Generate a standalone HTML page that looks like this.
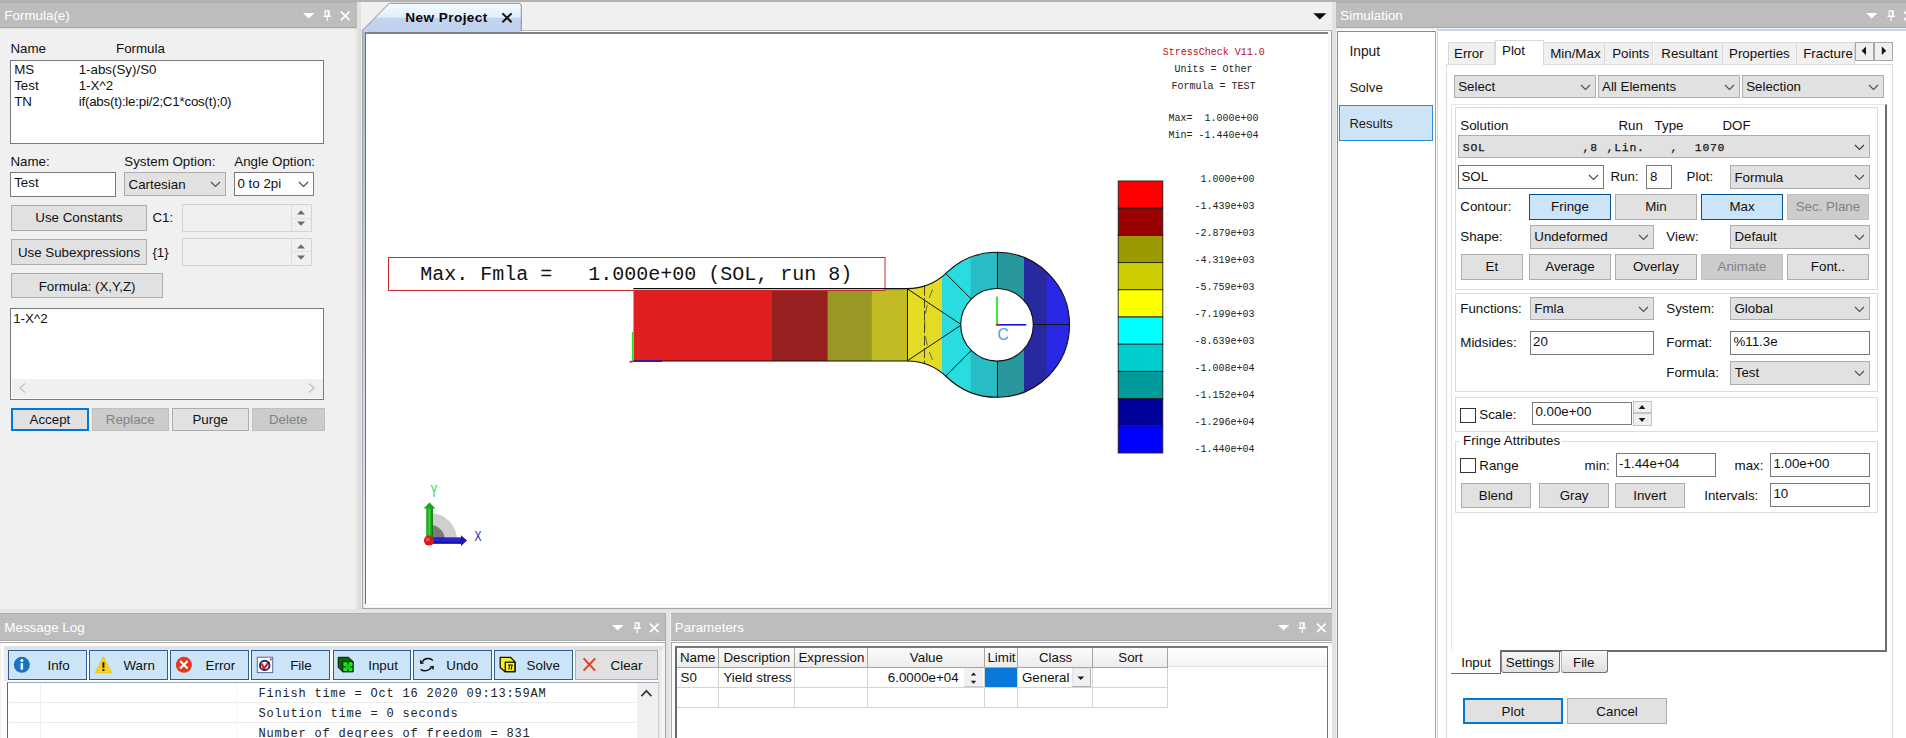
<!DOCTYPE html>
<html lang="en"><head><meta charset="utf-8"><title>StressCheck</title>
<style>
html,body{margin:0;padding:0;}
body{width:1906px;height:738px;overflow:hidden;background:#f0f0f0;position:relative;font-family:"Liberation Sans",sans-serif;font-size:13.33px;color:#111;}
body>div{position:absolute;}
.t{position:absolute;line-height:1;white-space:nowrap;}
.a{position:absolute;overflow:visible;}
</style></head><body>
<div style="left:0.0px;top:0.0px;width:1906.0px;height:2.0px;background:#b2b2b2;"></div>
<div style="left:0.0px;top:1.6px;width:356.6px;height:26.6px;background:#bdbdbd;border-top:1px solid #b0b0b0;border-bottom:1px solid #a9a9a9;box-sizing:border-box;"></div>
<div class="t" style="left:4.3px;top:9.46px;font-size:13.4px;color:#fff;">Formula(e)</div>
<svg class="a" style="left:302.8px;top:13.1px" width="12" height="7"><polygon points="0,0 11.4,0 5.7,5.6" fill="#fff"/></svg>
<svg class="a" style="left:323.2px;top:9.6px" width="9" height="12"><path d="M2.2,0.8 H6.2 V6.2 H2.2 Z M0.5,6.4 H8 M4.2,6.4 V11" fill="none" stroke="#fff" stroke-width="1.2"/><path d="M5.4,1 V6" stroke="#fff" stroke-width="1.4"/></svg>
<svg class="a" style="left:340.4px;top:10.6px" width="11" height="11"><path d="M1,0.7 L9.6,9.1 M9.6,0.7 L1,9.1" stroke="#fff" stroke-width="1.7" fill="none"/></svg>
<div style="left:0.0px;top:28.0px;width:356.6px;height:1.0px;background:#dcdcdc;"></div>
<div style="left:353.6px;top:29.0px;width:7.9px;height:580.0px;background:linear-gradient(90deg,#f0f0f0,#e4e4e4 45%,#d6d6d6);"></div>
<div style="left:356.6px;top:2.0px;width:4.9px;height:27.0px;background:#e2e2e2;"></div>
<div class="t" style="left:10.4px;top:41.52px;font-size:13.33px;">Name</div>
<div class="t" style="left:116.0px;top:41.52px;font-size:13.33px;">Formula</div>
<div style="left:10.0px;top:60.0px;width:314.0px;height:84.0px;background:#fff;border:1px solid #7a7a7a;box-sizing:border-box;"></div>
<div class="t" style="left:14.2px;top:63.32px;font-size:13.33px;">MS</div>
<div class="t" style="left:78.7px;top:63.32px;font-size:13.33px;">1-abs(Sy)/S0</div>
<div class="t" style="left:14.2px;top:79.32px;font-size:13.33px;">Test</div>
<div class="t" style="left:78.7px;top:79.32px;font-size:13.33px;">1-X^2</div>
<div class="t" style="left:14.2px;top:95.32px;font-size:13.33px;">TN</div>
<div class="t" style="left:78.7px;top:95.32px;font-size:13.33px;letter-spacing:-0.22px;">if(abs(t):le:pi/2;C1*cos(t);0)</div>
<div class="t" style="left:10.4px;top:155.42px;font-size:13.33px;">Name:</div>
<div class="t" style="left:124.3px;top:155.42px;font-size:13.33px;">System Option:</div>
<div class="t" style="left:234.3px;top:155.42px;font-size:13.33px;">Angle Option:</div>
<div style="left:10.4px;top:172.4px;width:105.3px;height:25.0px;background:#fff;border:1px solid #7a7a7a;box-sizing:border-box;"></div>
<div class="t" style="left:14.2px;top:176.32px;font-size:13.33px;">Test</div>
<div style="left:124.3px;top:172.4px;width:101.5px;height:23.2px;background:#e1e1e1;border:1px solid #adadad;box-sizing:border-box;"></div>
<div class="t" style="left:128.5px;top:177.62px;font-size:13.33px;">Cartesian</div>
<svg class="a" style="left:209.7px;top:181.1px" width="11" height="6.5"><polyline points="1,1 5.5,5.5 10,1" fill="none" stroke="#505050" stroke-width="1.1"/></svg>
<div style="left:234.3px;top:172.4px;width:79.3px;height:23.2px;background:#fff;border:1px solid #7a7a7a;box-sizing:border-box;"></div>
<div class="t" style="left:237.5px;top:176.92px;font-size:13.33px;">0 to 2pi</div>
<svg class="a" style="left:297.5px;top:181.1px" width="11" height="6.5"><polyline points="1,1 5.5,5.5 10,1" fill="none" stroke="#484848" stroke-width="1.1"/></svg>
<div style="left:11.4px;top:205.4px;width:135.3px;height:25.2px;background:#e1e1e1;border:1px solid #adadad;box-sizing:border-box;"></div>
<div class="t" style="left:-121.0px;width:400px;text-align:center;top:211.42px;font-size:13.33px;">Use Constants</div>
<div class="t" style="left:152.4px;top:211.42px;font-size:13.33px;">C1:</div>
<div style="left:182.2px;top:204.4px;width:129.6px;height:27.2px;background:#f0f0f0;border:1px solid #d3d3d3;box-sizing:border-box;"></div>
<div style="left:291.3px;top:205.4px;width:19.5px;height:25.2px;background:#f0f0f0;border-left:1px solid #dedede;box-sizing:border-box;"></div>
<div style="left:292.3px;top:217.5px;width:18.5px;height:1.0px;background:#e2e2e2;"></div>
<svg class="a" style="left:297.0px;top:209.0px" width="8" height="18"><polygon points="0,5.4 8,5.4 4,1.2" fill="#6c6c6c"/><polygon points="0,12.6 8,12.6 4,16.8" fill="#6c6c6c"/></svg>
<div style="left:11.4px;top:239.4px;width:135.3px;height:25.2px;background:#e1e1e1;border:1px solid #adadad;box-sizing:border-box;"></div>
<div class="t" style="left:-121.0px;width:400px;text-align:center;top:245.52px;font-size:13.33px;">Use Subexpressions</div>
<div class="t" style="left:152.4px;top:245.52px;font-size:13.33px;">{1}</div>
<div style="left:182.2px;top:238.2px;width:129.6px;height:27.4px;background:#f0f0f0;border:1px solid #d3d3d3;box-sizing:border-box;"></div>
<div style="left:291.3px;top:239.2px;width:19.5px;height:25.4px;background:#f0f0f0;border-left:1px solid #dedede;box-sizing:border-box;"></div>
<div style="left:292.3px;top:251.4px;width:18.5px;height:1.0px;background:#e2e2e2;"></div>
<svg class="a" style="left:297.0px;top:242.9px" width="8" height="18"><polygon points="0,5.4 8,5.4 4,1.2" fill="#6c6c6c"/><polygon points="0,12.6 8,12.6 4,16.8" fill="#6c6c6c"/></svg>
<div style="left:11.2px;top:273.4px;width:151.8px;height:25.1px;background:#e1e1e1;border:1px solid #adadad;box-sizing:border-box;"></div>
<div class="t" style="left:-112.9px;width:400px;text-align:center;top:279.72px;font-size:13.33px;">Formula: (X,Y,Z)</div>
<div style="left:10.2px;top:308.3px;width:313.8px;height:91.5px;background:#fff;border:1px solid #7a7a7a;box-sizing:border-box;"></div>
<div class="t" style="left:13.2px;top:312.12px;font-size:13.33px;">1-X^2</div>
<div style="left:11.6px;top:379.0px;width:311.0px;height:19.4px;background:#f0f0f0;"></div>
<svg class="a" style="left:18px;top:381.5px" width="10" height="12"><polyline points="7,1.5 2,6 7,10.5" fill="none" stroke="#c2c2c2" stroke-width="1.3"/></svg>
<svg class="a" style="left:305.5px;top:381.5px" width="10" height="12"><polyline points="3,1.5 8,6 3,10.5" fill="none" stroke="#c2c2c2" stroke-width="1.3"/></svg>
<div style="left:11.2px;top:407.6px;width:77.4px;height:23.2px;background:#e1e1e1;border:2px solid #0078d7;box-sizing:border-box;"></div>
<div class="t" style="left:-150.1px;width:400px;text-align:center;top:412.82px;font-size:13.33px;">Accept</div>
<div style="left:91.5px;top:407.6px;width:77.3px;height:23.2px;background:#cccccc;border:1px solid #bfbfbf;color:#838383;box-sizing:border-box;"></div>
<div class="t" style="left:-69.8px;width:400px;text-align:center;top:412.82px;font-size:13.33px;color:#838383;">Replace</div>
<div style="left:171.5px;top:407.6px;width:77.3px;height:23.2px;background:#e1e1e1;border:1px solid #adadad;box-sizing:border-box;"></div>
<div class="t" style="left:10.2px;width:400px;text-align:center;top:412.82px;font-size:13.33px;">Purge</div>
<div style="left:251.5px;top:407.6px;width:73.4px;height:23.2px;background:#cccccc;border:1px solid #bfbfbf;color:#838383;box-sizing:border-box;"></div>
<div class="t" style="left:88.2px;width:400px;text-align:center;top:412.82px;font-size:13.33px;color:#838383;">Delete</div>
<div style="left:361.5px;top:29.5px;width:970.0px;height:1.0px;background:#b4b4b4;"></div>
<div style="left:361.5px;top:30.5px;width:970.0px;height:578.1px;background:#e9eef8;border:1px solid #a4a4a4;box-sizing:border-box;"></div>
<div style="left:362.5px;top:31.4px;width:968.1px;height:576.2px;background:#fff;"></div>
<div style="left:362.5px;top:31.4px;width:2.9px;height:576.2px;background:linear-gradient(180deg,#a9b9e2 0,#b4c2e6 25%,#d2d9ec 60%,#e6eaf5 100%);"></div>
<div style="left:365.2px;top:31.6px;width:962.8px;height:572.8px;background:#fff;border-left:1.2px solid #6e6e78;border-top:2px solid #828282;box-sizing:border-box;"></div>
<div style="left:366.5px;top:604.4px;width:964.0px;height:3.2px;background:linear-gradient(180deg,#e4e6ea 0,#fdfdfe 1px,#fff 2px,#eaeff8);"></div>
<div style="left:1328.0px;top:33.0px;width:2.6px;height:574.0px;background:linear-gradient(90deg,#e4e6ea 0,#fdfdfe 1px,#f6f8fc);"></div>
<div style="left:1331.5px;top:2.0px;width:4.5px;height:736.0px;background:#e2e2e2;"></div>
<div style="left:362.5px;top:29.6px;width:158.9px;height:2.4px;background:#c0d1ef;"></div>
<svg class="a" style="left:360px;top:0px" width="170" height="32">
<defs><linearGradient id="tg" x1="0" y1="0" x2="0" y2="1">
<stop offset="0" stop-color="#f2fbff"/><stop offset="0.50" stop-color="#dff0fc"/><stop offset="0.54" stop-color="#c3d4f1"/><stop offset="1" stop-color="#c0d1ef"/></linearGradient></defs>
<path d="M1.8,31 L28.5,4 Q29.3,3.3 30.5,3.3 L158.6,3.3 Q161.3,3.3 161.3,6 L161.3,31 Z" fill="url(#tg)"/><path d="M1.8,31 L28.5,4 Q29.3,3.3 30.5,3.3 L158.6,3.3 Q161.3,3.3 161.3,6 L161.3,31" fill="none" stroke="#8e8e8e" stroke-width="1"/>
<path d="M142.4,13.4 L151.6,22.2 M151.6,13.4 L142.4,22.2" stroke="#0c0c0c" stroke-width="2" fill="none"/>
</svg>
<div class="t" style="left:405.3px;top:10.79px;font-size:13.6px;font-weight:bold;letter-spacing:0.42px;color:#0a0a0a;">New Project</div>
<svg class="a" style="left:1313px;top:13.2px" width="14" height="8"><polygon points="0.3,0.3 13.3,0.3 6.8,6.6" fill="#0a0a0a"/></svg>
<svg class="a" style="left:0;top:0" width="1906" height="738" viewBox="0 0 1906 738">
<defs><clipPath id="cp"><path clip-rule="evenodd" d="M633.3,288.6 L907.0,288.6 A57.2,57.2 0 0 0 946.7,272.6 A72.5,72.5 0 1 1 946.7,377.0 A57.2,57.2 0 0 0 907.0,361.0 L633.3,361.0 Z M960.7,324.8 A36.3,36.3 0 1 0 1033.3,324.8 A36.3,36.3 0 1 0 960.7,324.8 Z"/></clipPath></defs>
<g clip-path="url(#cp)">
<rect x="633.3" y="240" width="138.4" height="170" fill="#e02020"/>
<rect x="771.3" y="240" width="56.7" height="170" fill="#982020"/>
<rect x="827.6" y="240" width="44.6" height="170" fill="#9a9824"/>
<rect x="871.8" y="240" width="35.6" height="170" fill="#c0ba24"/>
<rect x="907.0" y="240" width="35.4" height="170" fill="#e4dc24"/>
<rect x="942.0" y="240" width="29.0" height="170" fill="#28dce0"/>
<rect x="970.6" y="240" width="26.4" height="170" fill="#28bcc4"/>
<rect x="996.6" y="240" width="27.8" height="170" fill="#28989c"/>
<rect x="1024.0" y="240" width="23.1" height="170" fill="#2828a0"/>
<rect x="1046.7" y="240" width="24.7" height="170" fill="#2828e6"/>
</g>
<rect x="388.5" y="257.5" width="496.5" height="33" fill="#fff" stroke="#c6282e" stroke-width="1"/>
<path d="M907.5,288.6 V361.0 M907.0,288.6 L960.9,324.4 M907.0,361.0 L960.9,325.2 M997.5,252.3 V288.5 M997.5,361.1 V397.3 M1033.3,324.5 H1069.5 M945.7,273.5 L971.3,299.1 M945.7,376.1 L971.3,350.5" fill="none" stroke="#141414" stroke-width="1"/>
<path d="M924.5,285.6 V364.0" fill="none" stroke="#4a4618" stroke-width="1" stroke-dasharray="10,2.5"/>
<path d="M932.6,289.6 Q916.8,324.8 932.6,360.0" fill="none" stroke="#4a4a20" stroke-width="0.8" stroke-dasharray="9,7"/>
<path d="M633.3,288.6 L907.0,288.6 A57.2,57.2 0 0 0 946.7,272.6 A72.5,72.5 0 1 1 946.7,377.0 A57.2,57.2 0 0 0 907.0,361.0 L633.3,361.0" fill="none" stroke="#101010" stroke-width="1.1"/>
<circle cx="997.0" cy="324.8" r="36.3" fill="none" stroke="#101010" stroke-width="1.1"/>
<path d="M632.6999999999999,332 V361.0" stroke="#28e028" stroke-width="1.6"/>
<path d="M633.3,361.2 H662" stroke="#1818e8" stroke-width="1.6"/>
<rect x="629.6" y="360.8" width="3.2" height="1.8" fill="#d02020"/>
<path d="M997.0,296.4 V324.8" stroke="#10e010" stroke-width="1.6"/>
<path d="M997.0,324.8 H1026.2" stroke="#1010f0" stroke-width="1.6"/>
<rect x="995.8" y="323.8" width="3" height="2" fill="#e02020"/>
<text x="997.4" y="340.4" font-size="15.6" fill="#4a9fd6" font-family="Liberation Sans, sans-serif">C</text>
<text x="420.2" y="279.6" font-size="20" fill="#111" font-family="Liberation Mono, monospace" xml:space="preserve">Max. Fmla =   1.000e+00 (SOL, run 8)</text>
<text x="1213.8" y="54.8" font-size="10" fill="#c01010" text-anchor="middle" font-family="Liberation Mono, monospace" xml:space="preserve">StressCheck V11.0</text>
<text x="1213.5" y="71.9" font-size="10" fill="#222" text-anchor="middle" font-family="Liberation Mono, monospace" xml:space="preserve">Units = Other</text>
<text x="1213.5" y="89.0" font-size="10" fill="#222" text-anchor="middle" font-family="Liberation Mono, monospace" xml:space="preserve">Formula = TEST</text>
<text x="1213.5" y="120.6" font-size="10" fill="#222" text-anchor="middle" font-family="Liberation Mono, monospace" xml:space="preserve">Max=  1.000e+00</text>
<text x="1213.5" y="138.2" font-size="10" fill="#222" text-anchor="middle" font-family="Liberation Mono, monospace" xml:space="preserve">Min= -1.440e+04</text>
<rect x="1118.2" y="181.0" width="44.6" height="27.2" fill="#ff0000" stroke="#202020" stroke-width="0.9"/>
<rect x="1118.2" y="208.2" width="44.6" height="27.2" fill="#9a0000" stroke="#202020" stroke-width="0.9"/>
<rect x="1118.2" y="235.4" width="44.6" height="27.2" fill="#9a9a00" stroke="#202020" stroke-width="0.9"/>
<rect x="1118.2" y="262.6" width="44.6" height="27.2" fill="#cdcd00" stroke="#202020" stroke-width="0.9"/>
<rect x="1118.2" y="289.8" width="44.6" height="27.2" fill="#ffff00" stroke="#202020" stroke-width="0.9"/>
<rect x="1118.2" y="317.0" width="44.6" height="27.2" fill="#00ffff" stroke="#202020" stroke-width="0.9"/>
<rect x="1118.2" y="344.2" width="44.6" height="27.2" fill="#00cdcd" stroke="#202020" stroke-width="0.9"/>
<rect x="1118.2" y="371.4" width="44.6" height="27.2" fill="#009a9a" stroke="#202020" stroke-width="0.9"/>
<rect x="1118.2" y="398.6" width="44.6" height="27.2" fill="#00009a" stroke="#202020" stroke-width="0.9"/>
<rect x="1118.2" y="425.8" width="44.6" height="27.2" fill="#0000ff" stroke="#202020" stroke-width="0.9"/>
<text x="1254.6" y="181.8" font-size="10" fill="#222" text-anchor="end" font-family="Liberation Mono, monospace">1.000e+00</text>
<text x="1254.6" y="208.8" font-size="10" fill="#222" text-anchor="end" font-family="Liberation Mono, monospace">-1.439e+03</text>
<text x="1254.6" y="235.9" font-size="10" fill="#222" text-anchor="end" font-family="Liberation Mono, monospace">-2.879e+03</text>
<text x="1254.6" y="262.9" font-size="10" fill="#222" text-anchor="end" font-family="Liberation Mono, monospace">-4.319e+03</text>
<text x="1254.6" y="289.9" font-size="10" fill="#222" text-anchor="end" font-family="Liberation Mono, monospace">-5.759e+03</text>
<text x="1254.6" y="317.0" font-size="10" fill="#222" text-anchor="end" font-family="Liberation Mono, monospace">-7.199e+03</text>
<text x="1254.6" y="344.0" font-size="10" fill="#222" text-anchor="end" font-family="Liberation Mono, monospace">-8.639e+03</text>
<text x="1254.6" y="371.0" font-size="10" fill="#222" text-anchor="end" font-family="Liberation Mono, monospace">-1.008e+04</text>
<text x="1254.6" y="398.0" font-size="10" fill="#222" text-anchor="end" font-family="Liberation Mono, monospace">-1.152e+04</text>
<text x="1254.6" y="425.1" font-size="10" fill="#222" text-anchor="end" font-family="Liberation Mono, monospace">-1.296e+04</text>
<text x="1254.6" y="452.1" font-size="10" fill="#222" text-anchor="end" font-family="Liberation Mono, monospace">-1.440e+04</text>
<path d="M430,540 L430,513 A27,27 0 0 1 457,540 Z" fill="#cfcfcf"/>
<path d="M430,540 L430,525 A15,15 0 0 1 445,540 Z" fill="#7a7a7a"/>
<defs><linearGradient id="gg" x1="0" x2="1"><stop offset="0" stop-color="#0c8c0c"/><stop offset="0.45" stop-color="#30e030"/><stop offset="1" stop-color="#0a6a0a"/></linearGradient><linearGradient id="bg" x1="0" x2="0" y1="0" y2="1"><stop offset="0" stop-color="#1a1ab0"/><stop offset="0.4" stop-color="#2828f0"/><stop offset="1" stop-color="#0a0a70"/></linearGradient></defs>
<rect x="426.3" y="508" width="6.6" height="30" fill="url(#gg)"/><polygon points="423.6,508.6 435.4,508.6 429.5,502.6" fill="#18a818"/>
<rect x="431" y="537.4" width="30.4" height="6.4" fill="url(#bg)"/><polygon points="461,535.2 461,546 467,540.6" fill="#1616a8"/>
<circle cx="429" cy="540.6" r="5" fill="#d81818"/><circle cx="427.8" cy="539.4" r="2" fill="#f05050"/>
<text x="430.6" y="497.3" font-size="15.8" textLength="7" lengthAdjust="spacingAndGlyphs" fill="#2fd02f" font-family="Liberation Sans, sans-serif">Y</text>
<text x="474.4" y="540.6" font-size="15" textLength="7" lengthAdjust="spacingAndGlyphs" fill="#2222c4" font-family="Liberation Sans, sans-serif">X</text>
</svg>
<div style="left:0.0px;top:608.8px;width:1331.5px;height:4.2px;background:#e4e4e4;"></div>
<div style="left:0.0px;top:613.0px;width:665.6px;height:28.0px;background:#bdbdbd;border-top:1px solid #b0b0b0;border-bottom:1px solid #a9a9a9;box-sizing:border-box;"></div>
<div class="t" style="left:4.3px;top:620.86px;font-size:13.4px;color:#fff;">Message Log</div>
<svg class="a" style="left:611.8px;top:625.2px" width="12" height="7"><polygon points="0,0 11.4,0 5.7,5.6" fill="#fff"/></svg>
<svg class="a" style="left:632.6px;top:621.7px" width="9" height="12"><path d="M2.2,0.8 H6.2 V6.2 H2.2 Z M0.5,6.4 H8 M4.2,6.4 V11" fill="none" stroke="#fff" stroke-width="1.2"/><path d="M5.4,1 V6" stroke="#fff" stroke-width="1.4"/></svg>
<svg class="a" style="left:649.4px;top:622.7px" width="11" height="11"><path d="M1,0.7 L9.6,9.1 M9.6,0.7 L1,9.1" stroke="#fff" stroke-width="1.7" fill="none"/></svg>
<div style="left:665.6px;top:613.0px;width:4.9px;height:125.0px;background:#e2e2e2;"></div>
<div style="left:0.0px;top:641.0px;width:665.6px;height:97.0px;background:#f0f0f0;"></div>
<div style="left:0.0px;top:641.0px;width:665.6px;height:1.0px;background:#fafafa;"></div>
<div style="left:0.0px;top:642.0px;width:665.6px;height:1.0px;background:#adadad;"></div>
<div style="left:1.0px;top:643.0px;width:661.5px;height:95.0px;background:#fcfcfc;"></div>
<div style="left:4.0px;top:646.0px;width:658.5px;height:4.0px;background:#e2e2e2;"></div>
<div style="left:4.0px;top:650.0px;width:4.2px;height:31.0px;background:#ebebeb;"></div>
<div style="left:657.6px;top:650.0px;width:4.9px;height:88.0px;background:#ebebeb;"></div>
<div style="left:664.6px;top:613.0px;width:1.0px;height:125.0px;background:#a8a8a8;"></div>
<div style="left:8.2px;top:650.2px;width:78.6px;height:29.6px;background:#cce4f7;border:1px solid #2a5c98;box-sizing:border-box;"></div>
<div class="t" style="left:47.5px;top:659.02px;font-size:13.33px;">Info</div>
<div style="left:89.4px;top:650.2px;width:78.5px;height:29.6px;background:#cce4f7;border:1px solid #2a5c98;box-sizing:border-box;"></div>
<div class="t" style="left:123.5px;top:659.02px;font-size:13.33px;">Warn</div>
<div style="left:170.3px;top:650.2px;width:78.5px;height:29.6px;background:#cce4f7;border:1px solid #2a5c98;box-sizing:border-box;"></div>
<div class="t" style="left:205.6px;top:659.02px;font-size:13.33px;">Error</div>
<div style="left:251.4px;top:650.2px;width:78.5px;height:29.6px;background:#cce4f7;border:1px solid #2a5c98;box-sizing:border-box;"></div>
<div class="t" style="left:290.2px;top:659.02px;font-size:13.33px;">File</div>
<div style="left:332.5px;top:650.2px;width:78.1px;height:29.6px;background:#cce4f7;border:1px solid #2a5c98;box-sizing:border-box;"></div>
<div class="t" style="left:368.2px;top:659.02px;font-size:13.33px;">Input</div>
<div style="left:413.4px;top:650.2px;width:78.3px;height:29.6px;background:#cce4f7;border:1px solid #2a5c98;box-sizing:border-box;"></div>
<div class="t" style="left:446.3px;top:659.02px;font-size:13.33px;">Undo</div>
<div style="left:494.0px;top:650.2px;width:78.8px;height:29.6px;background:#cce4f7;border:1px solid #2a5c98;box-sizing:border-box;"></div>
<div class="t" style="left:526.6px;top:659.02px;font-size:13.33px;">Solve</div>
<div style="left:575.2px;top:650.2px;width:82.4px;height:29.6px;background:#e1e1e1;border:1px solid #adadad;box-sizing:border-box;"></div>
<div class="t" style="left:610.6px;top:659.02px;font-size:13.33px;">Clear</div>
<svg class="a" style="left:0;top:640px" width="666" height="50" viewBox="0 640 666 50"><circle cx="21.8" cy="664.8" r="8" fill="#1673c6"/><rect x="20.6" y="663.2" width="2.5" height="6.4" fill="#fff"/><circle cx="21.85" cy="660.5" r="1.5" fill="#fff"/><polygon points="103.4,656.8 111.6,672.8 95.2,672.8" fill="#f8d21c" stroke="#e8bc10" stroke-width="0.8" stroke-linejoin="round"/><rect x="102.4" y="662.2" width="2" height="5.6" fill="#1a1a1a"/><rect x="102.4" y="669" width="2" height="2" fill="#1a1a1a"/><circle cx="183.9" cy="664.8" r="8" fill="#e23a1c"/><path d="M180.2,661.1 L187.6,668.5 M187.6,661.1 L180.2,668.5" stroke="#fff" stroke-width="2.1"/><rect x="257.3" y="657.2" width="15.4" height="15.4" fill="#fff" stroke="#5c6c9c" stroke-width="1"/><path d="M261.6,663.6 L264,668.8 L269,661.6" fill="none" stroke="#d82424" stroke-width="2.3"/><ellipse cx="264.7" cy="665.4" rx="4.8" ry="4.6" fill="none" stroke="#26266c" stroke-width="1.9"/><circle cx="270.8" cy="659.4" r="1.1" fill="#d04030"/><polygon points="338.2,657.3 348.5,657.3 353,661.5 353,671.7 342.6,671.7 338.2,667.5" fill="#0c620c" stroke="#041a04" stroke-width="1" stroke-linejoin="round"/><rect x="342.8" y="661.7" width="10.2" height="10" fill="#22ee22" stroke="#041c04" stroke-width="1"/><path d="M347.9,662 V664.6 M347.9,669 V671.4 M343.2,666.7 H345.8 M350.2,666.7 H352.6" stroke="#0a560a" stroke-width="1.6"/><path d="M345.6,664.4 L350.2,669 M350.2,664.4 L345.6,669" stroke="#18b818" stroke-width="1.2"/><path d="M433,660.6 A6,5 0 0 0 422.6,661.6" fill="none" stroke="#111" stroke-width="1.4"/><polygon points="419.9,659.6 420.2,664 424.2,663.4" fill="#111"/><path d="M420.6,669.4 A6.4,5 0 0 0 431,667.6" fill="none" stroke="#111" stroke-width="1.4"/><polygon points="433.8,665.8 433.6,670 429.6,666.6" fill="#111"/><polygon points="500.2,657.3 510.5,657.3 515,661.9 515,671.6 504.8,671.6 500.2,667.5" fill="#f6ee1e" stroke="#121204" stroke-width="1.3" stroke-linejoin="round"/><rect x="505.3" y="662.2" width="9.6" height="9.4" fill="#faf424" stroke="#121204" stroke-width="1.3"/><path d="M508,665 H512.8 M509.6,665 L508.8,669.6 M512,665 L511.2,669.6" stroke="#111" stroke-width="1.1" fill="none"/><path d="M583.6,658.4 L595.2,670.6 M595.2,658.4 L583.6,670.6" stroke="#e03a28" stroke-width="1.9"/></svg>
<div style="left:7.4px;top:681.6px;width:651.2px;height:56.4px;background:#fff;border-left:1.4px solid #6a6a6a;border-top:1px solid #9aa7b5;border-right:1px solid #d0d0d0;box-sizing:border-box;"></div>
<div style="left:8.8px;top:701.5px;width:628.0px;height:1.0px;background:#ececec;"></div>
<div style="left:8.8px;top:721.5px;width:628.0px;height:1.0px;background:#ececec;"></div>
<div style="left:40.0px;top:682.6px;width:1.0px;height:55.4px;background:#f0f0f0;"></div>
<div style="left:236.4px;top:682.6px;width:1.0px;height:55.4px;background:#f4f4f4;"></div>
<div style="left:636.8px;top:682.6px;width:20.8px;height:55.4px;background:#f0f0f0;"></div>
<svg class="a" style="left:640.4px;top:688.6px" width="13" height="9"><polyline points="1.4,7.2 6.4,1.8 11.4,7.2" fill="none" stroke="#3a3a3a" stroke-width="1.7"/></svg>
<div class="t" style="left:258.4px;top:688.00px;font-size:12px;font-family:'Liberation Mono',monospace;color:#222;white-space:pre;letter-spacing:0.8px;">Finish time = Oct 16 2020 09:13:59AM</div>
<div class="t" style="left:258.4px;top:708.00px;font-size:12px;font-family:'Liberation Mono',monospace;color:#222;white-space:pre;letter-spacing:0.8px;">Solution time = 0 seconds</div>
<div class="t" style="left:258.4px;top:728.00px;font-size:12px;font-family:'Liberation Mono',monospace;color:#222;white-space:pre;letter-spacing:0.8px;">Number of degrees of freedom = 831</div>
<div style="left:670.5px;top:613.0px;width:661.0px;height:28.0px;background:#bdbdbd;border-top:1px solid #b0b0b0;border-bottom:1px solid #a9a9a9;box-sizing:border-box;"></div>
<div class="t" style="left:674.8px;top:620.86px;font-size:13.4px;color:#fff;">Parameters</div>
<svg class="a" style="left:1277.6px;top:625.2px" width="12" height="7"><polygon points="0,0 11.4,0 5.7,5.6" fill="#fff"/></svg>
<svg class="a" style="left:1298.4px;top:621.7px" width="9" height="12"><path d="M2.2,0.8 H6.2 V6.2 H2.2 Z M0.5,6.4 H8 M4.2,6.4 V11" fill="none" stroke="#fff" stroke-width="1.2"/><path d="M5.4,1 V6" stroke="#fff" stroke-width="1.4"/></svg>
<svg class="a" style="left:1316.2px;top:622.7px" width="11" height="11"><path d="M1,0.7 L9.6,9.1 M9.6,0.7 L1,9.1" stroke="#fff" stroke-width="1.7" fill="none"/></svg>
<div style="left:670.5px;top:641.0px;width:661.0px;height:97.0px;background:#fcfcfc;border-left:1px solid #a8a8a8;box-sizing:border-box;"></div>
<div style="left:670.5px;top:641.0px;width:661.0px;height:1.0px;background:#fafafa;"></div>
<div style="left:670.5px;top:642.0px;width:661.0px;height:1.0px;background:#adadad;"></div>
<div style="left:674.6px;top:646.4px;width:653.0px;height:91.6px;background:#fff;border-left:2px solid #696969;border-top:2px solid #787878;border-right:1.6px solid #727272;box-sizing:border-box;"></div>
<div style="left:676.6px;top:648.4px;width:650.0px;height:19.0px;background:linear-gradient(180deg,#fff,#f3f3f3);border-bottom:1px solid #e0e0e0;box-sizing:border-box;"></div>
<div style="left:677.0px;top:648.4px;width:42.0px;height:19.2px;background:linear-gradient(180deg,#fbfbfb,#ececec);border-right:1px solid #a6a6a6;border-bottom:1px solid #a6a6a6;box-sizing:border-box;"></div>
<div class="t" style="left:497.7px;width:400px;text-align:center;top:651.42px;font-size:13.33px;">Name</div>
<div style="left:718.0px;top:667.6px;width:1.0px;height:39.8px;background:#d4d4d4;"></div>
<div style="left:719.0px;top:648.4px;width:76.2px;height:19.2px;background:linear-gradient(180deg,#fbfbfb,#ececec);border-right:1px solid #a6a6a6;border-bottom:1px solid #a6a6a6;box-sizing:border-box;"></div>
<div class="t" style="left:556.8px;width:400px;text-align:center;top:651.42px;font-size:13.33px;">Description</div>
<div style="left:794.2px;top:667.6px;width:1.0px;height:39.8px;background:#d4d4d4;"></div>
<div style="left:795.2px;top:648.4px;width:73.0px;height:19.2px;background:linear-gradient(180deg,#fbfbfb,#ececec);border-right:1px solid #a6a6a6;border-bottom:1px solid #a6a6a6;box-sizing:border-box;"></div>
<div class="t" style="left:631.4px;width:400px;text-align:center;top:651.42px;font-size:13.33px;">Expression</div>
<div style="left:867.2px;top:667.6px;width:1.0px;height:39.8px;background:#d4d4d4;"></div>
<div style="left:868.2px;top:648.4px;width:117.0px;height:19.2px;background:linear-gradient(180deg,#fbfbfb,#ececec);border-right:1px solid #a6a6a6;border-bottom:1px solid #a6a6a6;box-sizing:border-box;"></div>
<div class="t" style="left:726.4px;width:400px;text-align:center;top:651.42px;font-size:13.33px;">Value</div>
<div style="left:984.2px;top:667.6px;width:1.0px;height:39.8px;background:#d4d4d4;"></div>
<div style="left:985.2px;top:648.4px;width:33.2px;height:19.2px;background:linear-gradient(180deg,#fbfbfb,#ececec);border-right:1px solid #a6a6a6;border-bottom:1px solid #a6a6a6;box-sizing:border-box;"></div>
<div class="t" style="left:801.5px;width:400px;text-align:center;top:651.42px;font-size:13.33px;">Limit</div>
<div style="left:1017.4px;top:667.6px;width:1.0px;height:39.8px;background:#d4d4d4;"></div>
<div style="left:1018.4px;top:648.4px;width:75.0px;height:19.2px;background:linear-gradient(180deg,#fbfbfb,#ececec);border-right:1px solid #a6a6a6;border-bottom:1px solid #a6a6a6;box-sizing:border-box;"></div>
<div class="t" style="left:855.6px;width:400px;text-align:center;top:651.42px;font-size:13.33px;">Class</div>
<div style="left:1092.4px;top:667.6px;width:1.0px;height:39.8px;background:#d4d4d4;"></div>
<div style="left:1093.4px;top:648.4px;width:74.8px;height:19.2px;background:linear-gradient(180deg,#fbfbfb,#ececec);border-right:1px solid #a6a6a6;border-bottom:1px solid #a6a6a6;box-sizing:border-box;"></div>
<div class="t" style="left:930.5px;width:400px;text-align:center;top:651.42px;font-size:13.33px;">Sort</div>
<div style="left:1167.2px;top:667.6px;width:1.0px;height:39.8px;background:#d4d4d4;"></div>
<div style="left:676.6px;top:686.8px;width:491.6px;height:1.0px;background:#d4d4d4;"></div>
<div style="left:676.6px;top:706.6px;width:491.6px;height:1.0px;background:#d4d4d4;"></div>
<div class="t" style="left:680.6px;top:670.72px;font-size:13.33px;">S0</div>
<div class="t" style="left:723.4px;top:670.72px;font-size:13.33px;">Yield stress</div>
<div class="t" style="right:947.4px;top:670.72px;font-size:13.33px;">6.0000e+04</div>
<div style="left:964.2px;top:668.2px;width:19.0px;height:18.4px;background:#f0f0f0;border-bottom:1px solid #c8c8c8;box-sizing:border-box;"></div>
<svg class="a" style="left:969.4px;top:670px" width="9" height="16"><polygon points="1.8,5.4 7.2,5.4 4.5,2.4" fill="#1a1a1a"/><polygon points="1.8,10.8 7.2,10.8 4.5,13.8" fill="#1a1a1a"/></svg>
<div style="left:984.8px;top:668.0px;width:32.0px;height:18.8px;background:#0a78d8;"></div>
<div class="t" style="left:1022.0px;top:670.72px;font-size:13.33px;">General</div>
<div style="left:1071.6px;top:668.4px;width:19.2px;height:18.2px;background:#f0f0f0;border:1px solid #e4e4e4;border-right:1px solid #b0b0b0;border-bottom:1px solid #b0b0b0;box-sizing:border-box;"></div>
<svg class="a" style="left:1077.4px;top:675.6px" width="8" height="5"><polygon points="0.4,0.4 7.2,0.4 3.8,4" fill="#1a1a1a"/></svg>
<div style="left:1336.0px;top:1.6px;width:570.0px;height:26.6px;background:#bdbdbd;border-top:1px solid #b0b0b0;border-bottom:1px solid #a9a9a9;box-sizing:border-box;"></div>
<div class="t" style="left:1340.3px;top:9.46px;font-size:13.4px;color:#fff;">Simulation</div>
<svg class="a" style="left:1866.2px;top:13.1px" width="12" height="7"><polygon points="0,0 11.4,0 5.7,5.6" fill="#fff"/></svg>
<svg class="a" style="left:1886.6px;top:9.6px" width="9" height="12"><path d="M2.2,0.8 H6.2 V6.2 H2.2 Z M0.5,6.4 H8 M4.2,6.4 V11" fill="none" stroke="#fff" stroke-width="1.2"/><path d="M5.4,1 V6" stroke="#fff" stroke-width="1.4"/></svg>
<svg class="a" style="left:1903.4px;top:10.6px" width="11" height="11"><path d="M1,0.7 L9.6,9.1 M9.6,0.7 L1,9.1" stroke="#fff" stroke-width="1.7" fill="none"/></svg>
<div style="left:1336.0px;top:29.5px;width:570.0px;height:708.5px;background:#fff;"></div>
<div style="left:1436.5px;top:29.0px;width:469.5px;height:2.0px;background:#c9d5e4;"></div>
<div style="left:1336.6px;top:31.0px;width:99.4px;height:707.0px;background:#fff;border-left:1.2px solid #8a8a8a;border-top:1.2px solid #8a8a8a;border-right:1px solid #9aa2b2;box-sizing:border-box;"></div>
<div style="left:1436.6px;top:31.0px;width:1.6px;height:707.0px;background:#cfd6e6;"></div>
<div style="left:1336.0px;top:31.0px;width:0.8px;height:707.0px;background:#f0f0f0;"></div>
<div class="t" style="left:1349.4px;top:44.92px;font-size:13.8px;color:#1a1a1a;">Input</div>
<div class="t" style="left:1349.4px;top:81.06px;font-size:13.4px;color:#1a1a1a;">Solve</div>
<div style="left:1339.4px;top:105.2px;width:93.2px;height:35.6px;background:#cde4f7;border:1px solid #2e8ad8;box-sizing:border-box;"></div>
<div class="t" style="left:1349.4px;top:117.30px;font-size:13.0px;color:#1a1a1a;">Results</div>
<div style="left:1446.2px;top:63.6px;width:446.4px;height:674.4px;background:#fff;border:1px solid #dcdcdc;border-bottom:none;box-sizing:border-box;"></div>
<div style="left:1448.0px;top:42.4px;width:46.6px;height:21.4px;background:#f0f0f0;border:1px solid #d9d9d9;border-bottom:none;box-sizing:border-box;"></div>
<div class="t" style="left:1454.0px;top:46.72px;font-size:13.33px;">Error</div>
<div style="left:1543.7px;top:42.4px;width:61.6px;height:21.4px;background:#f0f0f0;border:1px solid #d9d9d9;border-bottom:none;box-sizing:border-box;border-left:none;"></div>
<div class="t" style="left:1550.2px;top:46.72px;font-size:13.33px;">Min/Max</div>
<div style="left:1605.3px;top:42.4px;width:48.2px;height:21.4px;background:#f0f0f0;border:1px solid #d9d9d9;border-bottom:none;box-sizing:border-box;border-left:none;"></div>
<div class="t" style="left:1612.2px;top:46.72px;font-size:13.33px;">Points</div>
<div style="left:1653.5px;top:42.4px;width:69.2px;height:21.4px;background:#f0f0f0;border:1px solid #d9d9d9;border-bottom:none;box-sizing:border-box;border-left:none;"></div>
<div class="t" style="left:1661.3px;top:46.72px;font-size:13.33px;">Resultant</div>
<div style="left:1722.7px;top:42.4px;width:73.9px;height:21.4px;background:#f0f0f0;border:1px solid #d9d9d9;border-bottom:none;box-sizing:border-box;border-left:none;"></div>
<div class="t" style="left:1729.0px;top:46.72px;font-size:13.33px;">Properties</div>
<div style="left:1796.6px;top:42.4px;width:58.8px;height:21.4px;background:#f0f0f0;border:1px solid #d9d9d9;border-bottom:none;box-sizing:border-box;border-left:none;"></div>
<div class="t" style="left:1803.2px;top:46.72px;font-size:13.33px;">Fracture</div>
<div style="left:1494.6px;top:40.2px;width:49.2px;height:24.8px;background:#fff;border:1px solid #d9d9d9;border-bottom:none;box-sizing:border-box;"></div>
<div class="t" style="left:1502.0px;top:44.32px;font-size:13.33px;">Plot</div>
<div style="left:1854.8px;top:42.4px;width:19.2px;height:18.2px;background:#f0f0f0;border:1px solid #a8a8a8;box-sizing:border-box;"></div>
<div style="left:1873.6px;top:42.4px;width:19.2px;height:18.2px;background:#f0f0f0;border:1px solid #a8a8a8;box-sizing:border-box;"></div>
<svg class="a" style="left:1861.4px;top:46.4px" width="6" height="10"><polygon points="5,0.6 5,9 0.6,4.8" fill="#101010"/></svg>
<svg class="a" style="left:1881px;top:46.4px" width="6" height="10"><polygon points="0.8,0.6 0.8,9 5.2,4.8" fill="#101010"/></svg>
<div style="left:1454.2px;top:75.4px;width:141.6px;height:23.0px;background:#e1e1e1;border:1px solid #adadad;box-sizing:border-box;"></div>
<div class="t" style="left:1458.2px;top:80.32px;font-size:13.33px;">Select</div>
<svg class="a" style="left:1579.7px;top:84.0px" width="11" height="6.5"><polyline points="1,1 5.5,5.5 10,1" fill="none" stroke="#505050" stroke-width="1.1"/></svg>
<div style="left:1598.4px;top:75.4px;width:141.4px;height:23.0px;background:#e1e1e1;border:1px solid #adadad;box-sizing:border-box;"></div>
<div class="t" style="left:1602.0px;top:80.32px;font-size:13.33px;">All Elements</div>
<svg class="a" style="left:1723.7px;top:84.0px" width="11" height="6.5"><polyline points="1,1 5.5,5.5 10,1" fill="none" stroke="#505050" stroke-width="1.1"/></svg>
<div style="left:1742.2px;top:75.4px;width:141.6px;height:23.0px;background:#e1e1e1;border:1px solid #adadad;box-sizing:border-box;"></div>
<div class="t" style="left:1746.2px;top:80.32px;font-size:13.33px;">Selection</div>
<svg class="a" style="left:1867.7px;top:84.0px" width="11" height="6.5"><polyline points="1,1 5.5,5.5 10,1" fill="none" stroke="#505050" stroke-width="1.1"/></svg>
<div style="left:1451.0px;top:103.8px;width:435.6px;height:548.2px;background:#fff;border-left:1px solid #e6e6e6;border-top:1px solid #e6e6e6;border-right:2px solid #6e6e6e;border-bottom:2px solid #6e6e6e;box-sizing:border-box;"></div>
<div style="left:1455.0px;top:107.2px;width:423.2px;height:182.6px;border:1px solid #dcdcdc;box-sizing:border-box;"></div>
<div style="left:1455.0px;top:293.4px;width:423.2px;height:98.6px;border:1px solid #dcdcdc;box-sizing:border-box;"></div>
<div style="left:1455.0px;top:397.2px;width:423.2px;height:34.6px;border:1px solid #dcdcdc;box-sizing:border-box;"></div>
<div style="left:1455.0px;top:441.0px;width:423.2px;height:72.2px;border:1px solid #dcdcdc;box-sizing:border-box;"></div>
<div style="left:1460.4px;top:434.0px;width:101.6px;height:16.0px;background:#fff;"></div>
<div class="t" style="left:1463.1px;top:434.02px;font-size:13.33px;">Fringe Attributes</div>
<div class="t" style="left:1460.3px;top:118.52px;font-size:13.33px;">Solution</div>
<div class="t" style="left:1618.4px;top:118.52px;font-size:13.33px;">Run</div>
<div class="t" style="left:1654.6px;top:118.52px;font-size:13.33px;">Type</div>
<div class="t" style="left:1722.4px;top:118.52px;font-size:13.33px;">DOF</div>
<div style="left:1458.4px;top:135.3px;width:411.4px;height:23.1px;background:#e1e1e1;border:1px solid #adadad;box-sizing:border-box;"></div>
<div class="t" style="left:1462.8px;top:141.88px;font-size:11.5px;font-family:'Liberation Mono',monospace;white-space:pre;color:#161616;letter-spacing:0.7px;-webkit-text-stroke:0.25px #161616;">SOL</div>
<div class="t" style="left:1582.6px;top:141.88px;font-size:11.5px;font-family:'Liberation Mono',monospace;white-space:pre;color:#161616;letter-spacing:0.7px;-webkit-text-stroke:0.25px #161616;">,8</div>
<div class="t" style="left:1606.6px;top:141.88px;font-size:11.5px;font-family:'Liberation Mono',monospace;white-space:pre;color:#161616;letter-spacing:0.7px;-webkit-text-stroke:0.25px #161616;">,Lin.</div>
<div class="t" style="left:1670.4px;top:141.88px;font-size:11.5px;font-family:'Liberation Mono',monospace;white-space:pre;color:#161616;letter-spacing:0.7px;-webkit-text-stroke:0.25px #161616;">,</div>
<div class="t" style="left:1694.8px;top:141.88px;font-size:11.5px;font-family:'Liberation Mono',monospace;white-space:pre;color:#161616;letter-spacing:0.7px;-webkit-text-stroke:0.25px #161616;">1070</div>
<svg class="a" style="left:1853.7px;top:144.3px" width="11" height="6.5"><polyline points="1,1 5.5,5.5 10,1" fill="none" stroke="#3c3c3c" stroke-width="1.1"/></svg>
<div style="left:1458.4px;top:165.3px;width:145.4px;height:23.5px;background:#fff;border:1px solid #7a7a7a;box-sizing:border-box;"></div>
<div class="t" style="left:1461.4px;top:169.92px;font-size:13.33px;">SOL</div>
<svg class="a" style="left:1587.7px;top:174.1px" width="11" height="6.5"><polyline points="1,1 5.5,5.5 10,1" fill="none" stroke="#484848" stroke-width="1.1"/></svg>
<div class="t" style="left:1610.4px;top:170.32px;font-size:13.33px;">Run:</div>
<div style="left:1646.3px;top:165.3px;width:25.7px;height:23.5px;background:#fff;border:1px solid #7a7a7a;box-sizing:border-box;"></div>
<div class="t" style="left:1649.9px;top:169.72px;font-size:13.33px;">8</div>
<div class="t" style="left:1686.6px;top:170.32px;font-size:13.33px;">Plot:</div>
<div style="left:1730.2px;top:165.3px;width:139.6px;height:23.5px;background:#e1e1e1;border:1px solid #adadad;box-sizing:border-box;"></div>
<div class="t" style="left:1734.4px;top:170.52px;font-size:13.33px;">Formula</div>
<svg class="a" style="left:1853.7px;top:174.1px" width="11" height="6.5"><polyline points="1,1 5.5,5.5 10,1" fill="none" stroke="#505050" stroke-width="1.1"/></svg>
<div class="t" style="left:1460.3px;top:200.32px;font-size:13.33px;">Contour:</div>
<div style="left:1529.2px;top:194.1px;width:81.6px;height:25.7px;background:#cce4f7;border:1px solid #005499;box-sizing:border-box;"></div>
<div class="t" style="left:1370.0px;width:400px;text-align:center;top:200.32px;font-size:13.33px;">Fringe</div>
<div style="left:1615.1px;top:194.1px;width:81.6px;height:25.7px;background:#e1e1e1;border:1px solid #adadad;box-sizing:border-box;"></div>
<div class="t" style="left:1455.9px;width:400px;text-align:center;top:200.32px;font-size:13.33px;">Min</div>
<div style="left:1701.2px;top:194.1px;width:81.6px;height:25.7px;background:#cce4f7;border:1px solid #005499;box-sizing:border-box;"></div>
<div class="t" style="left:1542.0px;width:400px;text-align:center;top:200.32px;font-size:13.33px;">Max</div>
<div style="left:1787.1px;top:194.1px;width:81.7px;height:25.7px;background:#cccccc;border:1px solid #bfbfbf;color:#838383;box-sizing:border-box;"></div>
<div class="t" style="left:1627.9px;width:400px;text-align:center;top:200.32px;font-size:13.33px;color:#838383;">Sec. Plane</div>
<div class="t" style="left:1460.3px;top:230.22px;font-size:13.33px;">Shape:</div>
<div style="left:1530.1px;top:225.4px;width:123.9px;height:23.3px;background:#e1e1e1;border:1px solid #adadad;box-sizing:border-box;"></div>
<div class="t" style="left:1534.3px;top:230.32px;font-size:13.33px;">Undeformed</div>
<svg class="a" style="left:1637.9px;top:234.1px" width="11" height="6.5"><polyline points="1,1 5.5,5.5 10,1" fill="none" stroke="#505050" stroke-width="1.1"/></svg>
<div class="t" style="left:1666.3px;top:230.22px;font-size:13.33px;">View:</div>
<div style="left:1730.2px;top:225.4px;width:139.6px;height:23.3px;background:#e1e1e1;border:1px solid #adadad;box-sizing:border-box;"></div>
<div class="t" style="left:1734.4px;top:230.32px;font-size:13.33px;">Default</div>
<svg class="a" style="left:1853.7px;top:234.1px" width="11" height="6.5"><polyline points="1,1 5.5,5.5 10,1" fill="none" stroke="#505050" stroke-width="1.1"/></svg>
<div style="left:1460.9px;top:254.3px;width:61.9px;height:25.3px;background:#e1e1e1;border:1px solid #adadad;box-sizing:border-box;"></div>
<div class="t" style="left:1291.8px;width:400px;text-align:center;top:260.32px;font-size:13.33px;">Et</div>
<div style="left:1529.2px;top:254.3px;width:81.6px;height:25.3px;background:#e1e1e1;border:1px solid #adadad;box-sizing:border-box;"></div>
<div class="t" style="left:1370.0px;width:400px;text-align:center;top:260.32px;font-size:13.33px;">Average</div>
<div style="left:1615.1px;top:254.3px;width:81.6px;height:25.3px;background:#e1e1e1;border:1px solid #adadad;box-sizing:border-box;"></div>
<div class="t" style="left:1455.9px;width:400px;text-align:center;top:260.32px;font-size:13.33px;">Overlay</div>
<div style="left:1701.2px;top:254.3px;width:81.6px;height:25.3px;background:#cccccc;border:1px solid #bfbfbf;color:#838383;box-sizing:border-box;"></div>
<div class="t" style="left:1542.0px;width:400px;text-align:center;top:260.32px;font-size:13.33px;color:#838383;">Animate</div>
<div style="left:1787.1px;top:254.3px;width:81.7px;height:25.3px;background:#e1e1e1;border:1px solid #adadad;box-sizing:border-box;"></div>
<div class="t" style="left:1627.9px;width:400px;text-align:center;top:260.32px;font-size:13.33px;">Font..</div>
<div class="t" style="left:1460.3px;top:301.92px;font-size:13.33px;">Functions:</div>
<div style="left:1530.1px;top:297.3px;width:123.9px;height:23.1px;background:#e1e1e1;border:1px solid #adadad;box-sizing:border-box;"></div>
<div class="t" style="left:1534.3px;top:302.12px;font-size:13.33px;">Fmla</div>
<svg class="a" style="left:1637.9px;top:305.9px" width="11" height="6.5"><polyline points="1,1 5.5,5.5 10,1" fill="none" stroke="#505050" stroke-width="1.1"/></svg>
<div class="t" style="left:1666.3px;top:301.92px;font-size:13.33px;">System:</div>
<div style="left:1730.2px;top:297.3px;width:139.6px;height:23.1px;background:#e1e1e1;border:1px solid #adadad;box-sizing:border-box;"></div>
<div class="t" style="left:1734.4px;top:302.12px;font-size:13.33px;">Global</div>
<svg class="a" style="left:1853.7px;top:305.9px" width="11" height="6.5"><polyline points="1,1 5.5,5.5 10,1" fill="none" stroke="#505050" stroke-width="1.1"/></svg>
<div class="t" style="left:1460.3px;top:336.22px;font-size:13.33px;">Midsides:</div>
<div style="left:1530.1px;top:331.4px;width:123.9px;height:23.2px;background:#fff;border:1px solid #7a7a7a;box-sizing:border-box;"></div>
<div class="t" style="left:1533.1px;top:335.42px;font-size:13.33px;">20</div>
<div class="t" style="left:1666.3px;top:336.22px;font-size:13.33px;">Format:</div>
<div style="left:1730.2px;top:331.4px;width:139.6px;height:23.2px;background:#fff;border:1px solid #7a7a7a;box-sizing:border-box;"></div>
<div class="t" style="left:1733.4px;top:335.42px;font-size:13.33px;">%11.3e</div>
<div class="t" style="left:1666.3px;top:365.72px;font-size:13.33px;">Formula:</div>
<div style="left:1730.2px;top:361.2px;width:139.6px;height:23.4px;background:#e1e1e1;border:1px solid #adadad;box-sizing:border-box;"></div>
<div class="t" style="left:1734.8px;top:366.12px;font-size:13.33px;">Test</div>
<svg class="a" style="left:1853.7px;top:369.9px" width="11" height="6.5"><polyline points="1,1 5.5,5.5 10,1" fill="none" stroke="#505050" stroke-width="1.1"/></svg>
<div style="left:1460.4px;top:407.6px;width:15.2px;height:15.0px;background:#fff;border:1px solid #333;box-sizing:border-box;"></div>
<div class="t" style="left:1479.3px;top:408.02px;font-size:13.33px;">Scale:</div>
<div style="left:1532.4px;top:401.6px;width:99.4px;height:23.0px;background:#fff;border:1px solid #7a7a7a;box-sizing:border-box;"></div>
<div class="t" style="left:1535.4px;top:405.22px;font-size:13.33px;">0.00e+00</div>
<div style="left:1633.0px;top:400.6px;width:18.8px;height:12.6px;background:#f0f0f0;border:1px solid #c4c4c4;box-sizing:border-box;"></div>
<div style="left:1633.0px;top:413.2px;width:18.8px;height:12.6px;background:#f0f0f0;border:1px solid #c4c4c4;box-sizing:border-box;"></div>
<svg class="a" style="left:1638.4px;top:404px" width="8" height="20"><polygon points="0.6,5 7.4,5 4,1" fill="#1a1a1a"/><polygon points="0.6,14 7.4,14 4,18" fill="#1a1a1a"/></svg>
<div style="left:1460.4px;top:457.5px;width:15.2px;height:15.0px;background:#fff;border:1px solid #333;box-sizing:border-box;"></div>
<div class="t" style="left:1479.3px;top:458.52px;font-size:13.33px;">Range</div>
<div class="t" style="left:1584.6px;top:458.52px;font-size:13.33px;">min:</div>
<div style="left:1616.1px;top:453.3px;width:99.5px;height:23.3px;background:#fff;border:1px solid #7a7a7a;box-sizing:border-box;"></div>
<div class="t" style="left:1619.1px;top:457.12px;font-size:13.33px;">-1.44e+04</div>
<div class="t" style="left:1734.6px;top:458.52px;font-size:13.33px;">max:</div>
<div style="left:1770.0px;top:453.3px;width:99.8px;height:23.3px;background:#fff;border:1px solid #7a7a7a;box-sizing:border-box;"></div>
<div class="t" style="left:1773.4px;top:457.12px;font-size:13.33px;">1.00e+00</div>
<div style="left:1460.9px;top:482.6px;width:69.9px;height:25.0px;background:#e1e1e1;border:1px solid #adadad;box-sizing:border-box;"></div>
<div class="t" style="left:1295.8px;width:400px;text-align:center;top:488.52px;font-size:13.33px;">Blend</div>
<div style="left:1539.2px;top:482.6px;width:69.8px;height:25.0px;background:#e1e1e1;border:1px solid #adadad;box-sizing:border-box;"></div>
<div class="t" style="left:1374.1px;width:400px;text-align:center;top:488.52px;font-size:13.33px;">Gray</div>
<div style="left:1615.1px;top:482.6px;width:69.7px;height:25.0px;background:#e1e1e1;border:1px solid #adadad;box-sizing:border-box;"></div>
<div class="t" style="left:1449.9px;width:400px;text-align:center;top:488.52px;font-size:13.33px;">Invert</div>
<div class="t" style="left:1704.2px;top:488.52px;font-size:13.33px;">Intervals:</div>
<div style="left:1770.0px;top:483.4px;width:99.8px;height:23.2px;background:#fff;border:1px solid #7a7a7a;box-sizing:border-box;"></div>
<div class="t" style="left:1773.4px;top:487.32px;font-size:13.33px;">10</div>
<div style="left:1501.0px;top:651.4px;width:58.8px;height:21.4px;background:linear-gradient(180deg,#f6f6f6,#e2e2e2);border:1px solid #8a8a8a;border-top:1.6px solid #5a5a5a;border-right:1.5px solid #707070;border-bottom:1.5px solid #707070;border-radius:0 0 3px 3px;box-sizing:border-box;"></div>
<div style="left:1561.0px;top:651.4px;width:46.8px;height:21.4px;background:linear-gradient(180deg,#f6f6f6,#e0e0e0);border:1px solid #b4b4b4;border-top:none;border-right:1.5px solid #707070;border-bottom:1.5px solid #707070;border-radius:0 0 3px 3px;box-sizing:border-box;"></div>
<div style="left:1451.0px;top:650.0px;width:50.4px;height:24.4px;background:#fff;border-bottom:1.6px solid #6a6a6a;border-right:1.4px solid #6a6a6a;box-sizing:border-box;"></div>
<div class="t" style="left:1461.2px;top:655.72px;font-size:13.33px;">Input</div>
<div class="t" style="left:1505.8px;top:656.32px;font-size:13.33px;">Settings</div>
<div class="t" style="left:1573.0px;top:656.32px;font-size:13.33px;">File</div>
<div style="left:1463.4px;top:698.2px;width:99.4px;height:25.6px;background:#e1e1e1;border:2px solid #0078d7;box-sizing:border-box;"></div>
<div class="t" style="left:1313.1px;width:400px;text-align:center;top:704.52px;font-size:13.33px;">Plot</div>
<div style="left:1567.2px;top:698.2px;width:99.8px;height:25.6px;background:#e1e1e1;border:1px solid #adadad;box-sizing:border-box;"></div>
<div class="t" style="left:1417.1px;width:400px;text-align:center;top:704.52px;font-size:13.33px;">Cancel</div>
</body></html>
